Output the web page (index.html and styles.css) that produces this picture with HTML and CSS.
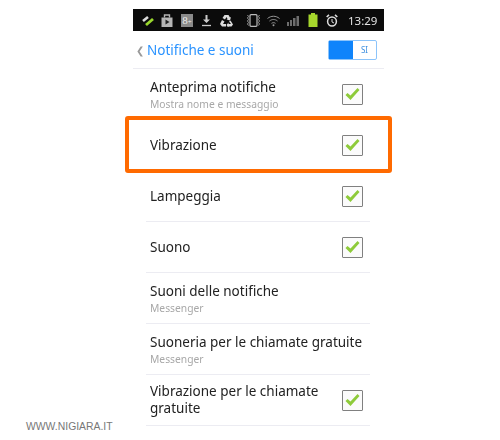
FILE: index.html
```html
<!DOCTYPE html>
<html lang="it">
<head>
    <meta charset="UTF-8">
    <meta name="viewport" content="width=device-width, initial-scale=1.0">
    <title>Notifiche e suoni</title>
    <link rel="stylesheet" href="styles.css">
</head>
<body>
    <div class="phone">
        <div class="status-bar">
            <svg class="icon" width="12" height="13" viewBox="0 0 12 13"><path d="M1 7l5-4" stroke="#ddd" stroke-width="2.600"/><path d="M4 11l7-6" stroke="#9ad82e" stroke-width="2.800"/></svg>
            <svg class="icon ic-bag" width="12" height="13" viewBox="0 0 12 13"><path d="M0.500 3.500h11V13H0.500z" fill="#b5b5b5"/><path d="M3.500 3.500V1h5v2.500" fill="none" stroke="#b5b5b5" stroke-width="1.400"/><path d="M4.500 5.500l4 2.500-4 2.500z" fill="#222"/></svg>
            <span class="gplus">8<small>+</small></span>
            <svg class="icon ic-down" width="9" height="13" viewBox="0 0 9 13"><path d="M3.500 1h2v4.500H8L4.500 9 1 5.500h2.500z" fill="#ccc"/><path d="M0 11.500h9" stroke="#ccc" stroke-width="1.300"/></svg>
            <svg class="icon ic-recycle" width="13" height="13" viewBox="0 0 13 13"><path d="M4.500 1h4l1.500 2.500 1-.5-1 3.500-3.500-1 1-.5L6.500 3 5 5.500 2.500 4zM10.500 6.500L13 10.500 11.500 12.500H8.500V14L6.500 11l2-2.500V10h2.500l-2-2.500zM2 6l2.500 1.500L3 10h3v2.500H2L0 10z" fill="#ddd"/></svg>
            <svg class="icon ic-vib" width="15" height="13" viewBox="0 0 15 13"><rect x="4" y="0.700" width="7" height="11.600" rx="1" fill="none" stroke="#bbb" stroke-width="1.200"/><path d="M1.500 1l1 1.500-1 1.500 1 1.500-1 1.500 1 1.500-1 1.500 1 1.500M13.500 1l-1 1.500 1 1.500-1 1.500 1 1.500-1 1.500 1 1.500-1 1.500" fill="none" stroke="#999"/></svg>
            <svg class="icon ic-wifi" width="13" height="13" viewBox="0 0 13 13"><g fill="none" stroke="#999"><path d="M0.500 4.500c3.500-3 8.500-3 12 0"/><path d="M2.500 7c2.500-2 5.500-2 8 0"/><path d="M4.500 9.300c1.200-.8 2.800-.8 4 0"/></g><circle cx="6.500" cy="11.300" r="1" fill="#999"/></svg>
            <svg class="icon ic-signal" width="12" height="13" viewBox="0 0 12 13"><path d="M0 8h2v4H0zM3 6h2v6H3zM6 4h2.500v8H6zM9.500 2H12v10H9.500z" fill="#6e6e6e"/></svg>
            <svg class="icon ic-battery" width="10" height="14" viewBox="0 0 10 14"><path d="M3 0h4v1.500h2.500V14H.5V1.500H3z" fill="#a5d62c"/></svg>
            <svg class="icon" width="12" height="13" viewBox="0 0 12 13"><circle cx="6" cy="7.500" r="4.400" fill="none" stroke="#ddd" stroke-width="1.500"/><path d="M6 5v3l2 1" fill="none" stroke="#ddd"/><path d="M0.700 3L3 .800M11.300 3L9 .800" stroke="#ddd" stroke-width="1.600"/></svg>
            <span class="clock">13:29</span>
        </div>

        <div class="title-bar">
            <span class="back">&#10094;</span>
            <span class="title">Notifiche e suoni</span>
            <div class="switch"><span class="switch-on"></span><span class="switch-label">SI</span></div>
        </div>

        <div class="row">
            <div class="row-text"><div class="label">Anteprima notifiche</div><div class="sub">Mostra nome e messaggio</div></div>
            <span class="check"><svg width="17" height="14" viewBox="0 0 16 14"><path d="M1 8l2-2 3 2.500L13 1l2 2-9 10z" fill="#8ecb3a"/></svg></span>
        </div>
        <div class="row">
            <div class="row-text"><div class="label">Vibrazione</div></div>
            <span class="check"><svg width="17" height="14" viewBox="0 0 16 14"><path d="M1 8l2-2 3 2.500L13 1l2 2-9 10z" fill="#8ecb3a"/></svg></span>
        </div>
        <div class="row">
            <div class="row-text"><div class="label">Lampeggia</div></div>
            <span class="check"><svg width="17" height="14" viewBox="0 0 16 14"><path d="M1 8l2-2 3 2.500L13 1l2 2-9 10z" fill="#8ecb3a"/></svg></span>
        </div>
        <div class="row">
            <div class="row-text"><div class="label">Suono</div></div>
            <span class="check"><svg width="17" height="14" viewBox="0 0 16 14"><path d="M1 8l2-2 3 2.500L13 1l2 2-9 10z" fill="#8ecb3a"/></svg></span>
        </div>
        <div class="row">
            <div class="row-text"><div class="label">Suoni delle notifiche</div><div class="sub">Messenger</div></div>
        </div>
        <div class="row">
            <div class="row-text"><div class="label">Suoneria per le chiamate gratuite</div><div class="sub">Messenger</div></div>
        </div>
        <div class="row">
            <div class="row-text"><div class="label tight">Vibrazione per le chiamate gratuite</div></div>
            <span class="check"><svg width="17" height="14" viewBox="0 0 16 14"><path d="M1 8l2-2 3 2.500L13 1l2 2-9 10z" fill="#8ecb3a"/></svg></span>
        </div>
    </div>

    <div class="highlight"></div>
    <div class="watermark">WWW.NIGIARA.IT</div>
</body>
</html>
```

FILE: styles.css
```css
body {
    margin: 0;
    background-color: white;
    font-family: "Noto Sans", "Open Sans", sans-serif;
    height: 440px;
    overflow: hidden;
}

.phone {
    width: 251px;
    margin: 9px 0 0 133px;
    filter: blur(0.3px);
}

.status-bar {
    display: flex;
    align-items: center;
    height: 22px;
    background-color: #0b0b0b;
    padding: 0 0 0 9px;
    gap: 8px;
    box-sizing: border-box;
}

.icon {
    flex: none;
}

.ic-bag {
    margin-left: -1px;
}

.ic-down,
.ic-recycle,
.ic-battery {
    margin-left: 1px;
}

.ic-vib {
    margin-left: 5px;
}

.ic-wifi {
    margin-left: -2px;
}

.ic-signal {
    margin-left: -1px;
}

.gplus {
    width: 12px;
    height: 13px;
    background-color: #8a8a8a;
    color: #eee;
    font-family: "Liberation Serif", serif;
    font-size: 11px;
    line-height: 13px;
    text-align: center;
}

.gplus small {
    font-size: 7px;
}

.clock {
    margin-left: 2px;
    color: #e4e4e4;
    font-size: 11.5px;
}

.title-bar {
    display: flex;
    align-items: center;
    height: 37px;
    padding: 0 7px 0 3px;
    border-bottom: 1px solid #ececf2;
}

.back {
    width: 11px;
    color: #999;
    font-size: 10px;
}

.title {
    flex: 1;
    color: #2a93ff;
    font-size: 13.5px;
}

.switch {
    display: flex;
    width: 47px;
    height: 18px;
    border: 1px solid #8cc4fa;
    border-radius: 2px;
}

.switch-on {
    width: 24px;
    background-color: #0f84fb;
}

.switch-label {
    flex: 1;
    color: #3d8fe0;
    font-size: 8px;
    line-height: 18px;
    text-align: center;
}

.row {
    display: flex;
    align-items: center;
    height: 50px;
    margin: 0 14px 0 13px;
    padding: 0 7px 0 4px;
    border-bottom: 1px solid #ececf2;
}

.row-text {
    flex: 1;
}

.label {
    color: #222;
    font-size: 13.5px;
    line-height: 18px;
}

.label.tight {
    width: 185px;
    line-height: 17px;
}

.sub {
    margin-bottom: -2px;
    color: #a8a8a8;
    font-size: 10.3px;
    line-height: 16px;
}

.check {
    display: flex;
    align-items: center;
    justify-content: center;
    width: 19px;
    height: 19px;
    border: 1.5px solid #808080;
    border-radius: 1px;
    background-color: #fbfbfb;
}

.highlight {
    position: absolute;
    left: 125px;
    top: 116px;
    width: 259px;
    height: 49px;
    border: 4px solid #ff6a00;
    border-radius: 3px;
}

.watermark {
    position: absolute;
    left: 26px;
    top: 421px;
    color: #777;
    font-family: "Liberation Sans", sans-serif;
    font-size: 10.4px;
}
```
